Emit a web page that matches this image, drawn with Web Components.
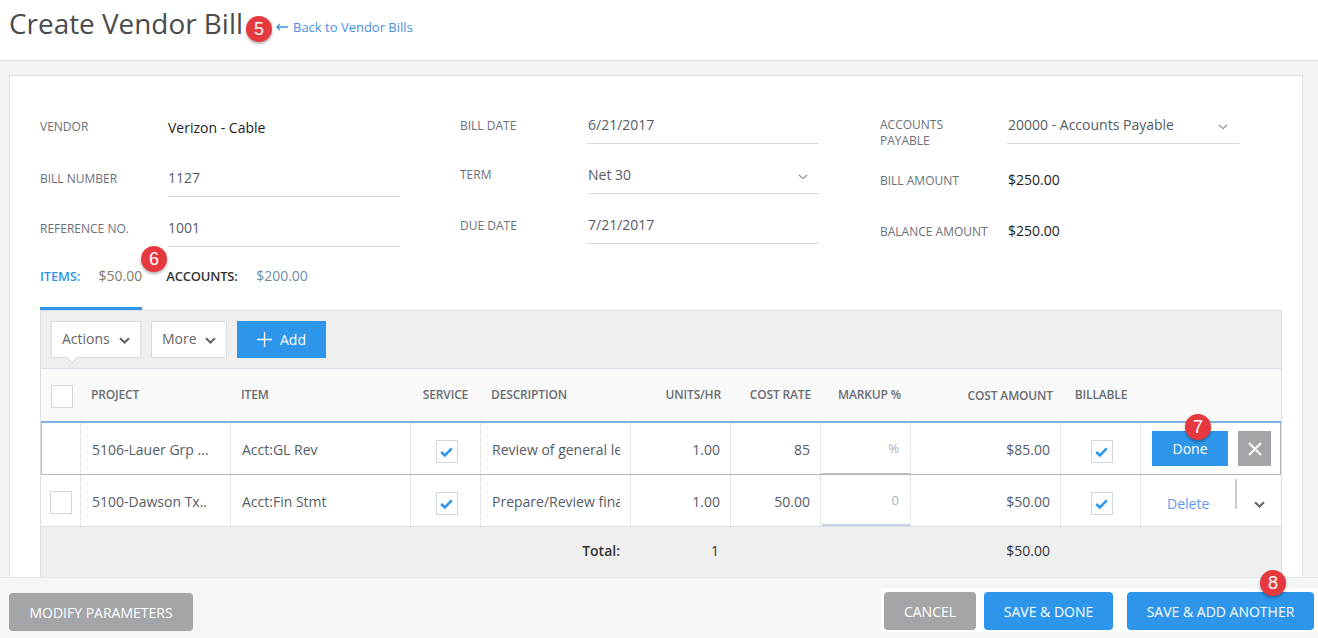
<!DOCTYPE html>
<html lang="en"><head><meta charset="utf-8"><title>Create Vendor Bill</title>
<style>
html,body{margin:0;padding:0;background:#f3f3f4;font-family:"Open Sans","Liberation Sans",sans-serif;color:#555c66}
</style></head><body>
<vb-page>
  <vb-header title-text="Create Vendor Bill" link="Back to Vendor Bills"></vb-header>
  <vb-card>
    <vb-form>
      <form-col style="--top:3px">
        <form-field label="Vendor" plain dark style="--lb:2px">Verizon - Cable</form-field>
        <form-field label="Bill Number">1127</form-field>
        <form-field label="Reference No.">1001</form-field>
      </form-col>
      <form-col style="--lw:127px;--vl:1px">
        <form-field label="Bill Date">6/21/2017</form-field>
        <form-field label="Term" select style="--lb:1px">Net 30</form-field>
        <form-field label="Due Date">7/21/2017</form-field>
      </form-col>
      <form-col style="--lw:127px;--vl:1px">
        <form-field label="Accounts Payable" select style="--ldy:13px;--lpr:30px">20000 - Accounts Payable</form-field>
        <form-field label="Bill Amount" plain dark style="--h:55px">$250.00</form-field>
        <form-field label="Balance Amount" plain dark style="--h:51px">$250.00</form-field>
      </form-col>
    </vb-form>
    <vb-tabs>
      <vb-tab name="ITEMS:" amount="$50.00" active></vb-tab>
      <vb-tab name="ACCOUNTS:" amount="$200.00"></vb-tab>
    </vb-tabs>
    <line-table>
      <line-toolbar>
        <menu-button notch style="--w:90px">Actions</menu-button>
        <menu-button style="--w:76px">More</menu-button>
        <add-button>Add</add-button>
      </line-toolbar>
      <line-row kind="head">
        <line-cell><check-box style="--mx:-1px;--my:2px"></check-box></line-cell>
        <line-cell head>PROJECT</line-cell>
        <line-cell head>ITEM</line-cell>
        <line-cell head align="center" style="--cx:1px">SERVICE</line-cell>
        <line-cell head>DESCRIPTION</line-cell>
        <line-cell head align="right" style="--pr:9px">UNITS/HR</line-cell>
        <line-cell head align="right" style="--pr:9px">COST RATE</line-cell>
        <line-cell head align="right" style="--pr:9px">MARKUP %</line-cell>
        <line-cell head align="right" style="--dy:2px;--pr:7px">COST AMOUNT</line-cell>
        <line-cell head align="center" style="--cx:2px">BILLABLE</line-cell>
        <line-cell></line-cell>
      </line-row>
      <line-row kind="edit">
        <line-cell></line-cell>
        <line-cell sep body>5106-Lauer Grp ...</line-cell>
        <line-cell sep body>Acct:GL Rev</line-cell>
        <line-cell sep align="center" style="--cx:2px"><check-box checked></check-box></line-cell>
        <line-cell sep body clip>Review of general le</line-cell>
        <line-cell sep body align="right">1.00</line-cell>
        <line-cell sep body align="right">85</line-cell>
        <line-cell sep align="right" input>%</line-cell>
        <line-cell sep body align="right">$85.00</line-cell>
        <line-cell sep align="center" style="--cx:2px"><check-box checked></check-box></line-cell>
        <line-cell sep flush><row-actions mode="edit"></row-actions></line-cell>
      </line-row>
      <line-row kind="body">
        <line-cell><check-box style="--mx:-2px;--my:4px"></check-box></line-cell>
        <line-cell sep body>5100-Dawson Tx..</line-cell>
        <line-cell sep body>Acct:Fin Stmt</line-cell>
        <line-cell sep align="center" style="--cx:2px"><check-box checked></check-box></line-cell>
        <line-cell sep body clip>Prepare/Review fina</line-cell>
        <line-cell sep body align="right">1.00</line-cell>
        <line-cell sep body align="right">50.00</line-cell>
        <line-cell sep align="right" input blue>0</line-cell>
        <line-cell sep body align="right">$50.00</line-cell>
        <line-cell sep align="center" style="--cx:2px"><check-box checked></check-box></line-cell>
        <line-cell sep flush><row-actions mode="view"></row-actions></line-cell>
      </line-row>
      <line-row kind="total">
        <line-cell></line-cell><line-cell></line-cell><line-cell></line-cell><line-cell></line-cell>
        <line-cell align="right" strong>Total:</line-cell>
        <line-cell align="right" dark style="--pr:11px">1</line-cell>
        <line-cell></line-cell><line-cell></line-cell>
        <line-cell align="right" dark>$50.00</line-cell>
        <line-cell></line-cell><line-cell></line-cell>
      </line-row>
    </line-table>
  </vb-card>
  <vb-footer>
    <foot-button slot="left" kind="gray" style="--w:184px">MODIFY PARAMETERS</foot-button>
    <foot-button kind="gray" style="--w:92px">CANCEL</foot-button>
    <foot-button style="--w:129px;--ml:8px">SAVE &amp; DONE</foot-button>
    <foot-button style="--w:187px;--ml:14px">SAVE &amp; ADD ANOTHER</foot-button>
  </vb-footer>
  <step-badge style="left:246px;top:16px">5</step-badge>
  <step-badge style="left:141px;top:246px">6</step-badge>
  <step-badge style="left:1185px;top:414px">7</step-badge>
  <step-badge style="left:1260px;top:570px">8</step-badge>
</vb-page>
<script>
const CHEV_THIN='<svg width="10" height="6" viewBox="0 0 10 6" fill="none" stroke="#7d8793" stroke-width="1.1"><path d="M1 1l4 3.6L9 1"/></svg>';
const CHEV_BOLD='<svg width="11" height="7" viewBox="0 0 11 7" fill="none" stroke="#666" stroke-width="2.2"><path d="M1 1.2l4.5 4.3L10 1.2"/></svg>';
function def(name,css,html){
  customElements.define(name,class extends HTMLElement{
    constructor(){super();this.attachShadow({mode:'open'});}
    connectedCallback(){
      const h=typeof html==='function'?html(this):html;
      this.shadowRoot.innerHTML='<style>'+css+'</style>'+h;
    }
  });
}
def('vb-page',`:host{display:flex;flex-direction:column;position:relative;width:1318px;height:638px;overflow:hidden;background:#f3f3f4}`,`<slot></slot>`);
def('vb-header',`:host{display:flex;align-items:center;height:60px;box-sizing:content-box;background:#fff;border-bottom:1px solid #d9dee6;padding-left:9px;flex:none}
h1{margin:0 0 14px;font:400 27.9px/36px "Open Sans",sans-serif;color:#4b4b4b;white-space:nowrap}
a{display:flex;align-items:center;margin:0 0 7px 33px;font:400 13px/18px "Open Sans",sans-serif;color:#4a90e2;gap:5px;white-space:nowrap}`,
 e=>`<h1>${e.getAttribute('title-text')}</h1><a><svg width="12" height="8" viewBox="0 0 12 8" fill="none" stroke="#3f8fe0" stroke-width="1.3"><path d="M12 4H1M4 1L1 4l3 3"/></svg>${e.getAttribute('link')}</a>`);
def('vb-card',`:host{display:block;flex:none;box-sizing:border-box;width:1294px;margin:14px 0 0 9px;padding:18px 20px 40px 30px;background:#fff;border:1px solid #d9dee6}`,`<slot></slot>`);
def('vb-form',`:host{display:flex;height:155px}`,`<slot></slot>`);
def('form-col',`:host{display:block;width:420px;flex:none;padding-top:var(--top,0)}`,`<slot></slot>`);
def('form-field',`:host{display:flex;align-items:flex-end;height:var(--h,50px);font:400 14px/20px "Open Sans",sans-serif;color:#555c66}
:host([dark]){color:#222}
.l{width:var(--lw,128px);flex:none;height:36px;margin-bottom:var(--lb,0);display:flex;align-items:center;font-size:12px;line-height:16px;color:#6b7078;text-transform:uppercase;padding:var(--ldy,0) var(--lpr,6px) 0 0;box-sizing:border-box}
.v{width:232px;flex:none;height:37px;box-sizing:border-box;border-bottom:1px solid #d5d9e0;display:flex;align-items:center;justify-content:space-between;padding:0 11px 0 var(--vl,0)}
:host([plain]) .v{border-color:transparent}
svg{display:block;margin-top:3px}`,
 e=>`<div class="l">${e.getAttribute('label')}</div><div class="v"><span><slot></slot></span>${e.hasAttribute('select')?CHEV_THIN:''}</div>`);
def('vb-tabs',`:host{display:flex;gap:24px;height:61px;box-sizing:border-box}`,`<slot></slot>`);
def('vb-tab',`:host{display:flex;gap:18.5px;box-sizing:border-box;height:61px;padding-top:18px;border-bottom:3px solid transparent;font:400 14px/18px "Open Sans",sans-serif;white-space:nowrap}
:host([active]){border-bottom-color:#2d96ea}
b{font-weight:600;font-size:13px;letter-spacing:-.2px;color:#333}
:host([active]) b{color:#2d96ea}
span{color:#6f8ca8}:host([active]) span{color:#84796a}`,
 e=>`<b>${e.getAttribute('name')}</b><span>${e.getAttribute('amount')}</span>`);
def('line-table',`:host{display:block;width:1242px;box-sizing:border-box;border:1px solid #d9dee6;background:#efefef}`,`<slot></slot>`);
def('line-toolbar',`:host{display:flex;gap:10px;height:58px;box-sizing:border-box;padding:10px 0 0 10px;border-bottom:1px solid #d9dee6;background:#efefef}`,`<slot></slot>`);
def('menu-button',`:host{display:flex;align-items:center;justify-content:space-between;position:relative;box-sizing:border-box;width:var(--w);height:37px;padding:0 10px;background:#fff;border:1px solid #d5dbe3;font:400 14px/20px "Open Sans",sans-serif;color:#666}
span{margin-top:-2px}svg{display:block;margin-top:2px}
i{position:absolute;left:15px;bottom:-5px;width:9px;height:9px;background:#fff;border:solid #d5dbe3;border-width:0 1px 1px 0;transform:rotate(45deg)}`,
 e=>`<span><slot></slot></span>${CHEV_BOLD}${e.hasAttribute('notch')?'<i></i>':''}`);
def('add-button',`:host{display:flex;align-items:center;gap:8px;box-sizing:border-box;width:89px;height:37px;padding-left:20px;background:#2d96ea;color:#fff;font:400 14px/20px "Open Sans",sans-serif}
svg{display:block}`,`<svg width="15" height="15" viewBox="0 0 15 15" stroke="#fff" stroke-width="1.3"><path d="M7.5 0v15M0 7.5h15"/></svg><span><slot></slot></span>`);
def('line-row',`:host{display:grid;grid-template-columns:39px 150px 180px 70px 150px 100px 90px 90px 150px 80px 141px;box-sizing:border-box;background:#fff}
:host([kind=head]){height:52px;background:#f9f9f9}
:host([kind=edit]){height:54px;border-top:2px solid #7fb2e0;border-bottom:1px solid #b4b6b9;box-shadow:inset 1px 0 #b4b6b9,inset -1px 0 #b4b6b9}
:host([kind=body]){height:52px;border-bottom:1px solid #d9dee6}
:host([kind=total]){height:50px;background:#efefef}`,`<slot></slot>`);
def('line-cell',`:host{display:flex;align-items:center;box-sizing:border-box;min-width:0;padding:0 10px 0 11px;font:400 14px/20px "Open Sans",sans-serif;color:#555c66;white-space:nowrap;overflow:hidden;position:relative}
:host([sep]){border-left:1px dotted #cfcfcf}
:host([body]){padding-top:2px}
:host([clip]) .t{display:block;overflow:hidden;max-width:128px}
:host([align=right]){justify-content:flex-end;padding-right:var(--pr,10px)}
:host([align=center]){justify-content:center;padding:0 0 0 var(--cx,0)}
:host([head]){font-size:12px;font-weight:600;letter-spacing:-.15px;color:#6a6d72;padding-top:var(--dy,0)}
:host([strong]){font-weight:600;font-size:14px;color:#333;padding-bottom:2px}
:host([dark]){color:#333;font-weight:400;padding-bottom:2px}
:host([input]){color:#a9b3bd;font-size:13px;padding-bottom:1px;padding-right:11px}
:host([flush]){padding:0;overflow:visible;align-items:stretch}
:host([input])::after{content:"";position:absolute;left:1px;right:0;bottom:0;height:1px;background:#b8bcc2}
:host([blue])::after{height:2px;background:#c6d2de}
.t{display:block;flex:none}
:host([flush]) .t{display:flex;flex:1}
slot{display:contents}`,`<div class="t"><slot></slot></div>`);
def('check-box',`:host{display:flex;align-items:center;justify-content:center;box-sizing:border-box;width:22px;height:var(--ch,23px);margin-left:var(--mx,0);margin-top:var(--my,6px);background:#fff;border:1px solid #d2d7de}`,
 e=>e.hasAttribute('checked')?`<svg width="13" height="10" viewBox="0 0 13 10" fill="none" stroke="#2d96ea" stroke-width="2.6"><path d="M1.2 5l3.6 3.4L11.8 1.4"/></svg>`:'');
def('row-actions',`:host{display:flex;flex:1;box-sizing:border-box;font:400 14px/20px "Open Sans",sans-serif}
.done{width:76px;height:35px;margin:8px 0 0 11px;background:#2d96ea;color:#fff;display:flex;align-items:center;justify-content:center}
.x{width:33px;height:35px;margin:8px 0 0 10px;background:#a3a5a8;display:flex;align-items:center;justify-content:center}
.del{width:94px;box-sizing:border-box;color:#5b9bf0;padding:19px 0 0 26px}
.bar{width:2px;height:30px;margin-top:4px;background:#c9cbce}
.ch{display:flex;margin:26px 0 0 17px}`,
 e=>e.getAttribute('mode')==='edit'
 ?`<div class="done">Done</div><div class="x"><svg width="14" height="14" viewBox="0 0 14 14" stroke="#fff" stroke-width="1.9"><path d="M1 1l12 12M13 1L1 13"/></svg></div>`
 :`<div class="del">Delete</div><div class="bar"></div><div class="ch">${CHEV_BOLD}</div>`);
def('vb-footer',`:host{position:absolute;left:0;right:0;bottom:0;height:61px;box-sizing:border-box;background:#f4f5f7;border-top:1px solid #e6e7e9;display:flex;justify-content:space-between}
.l{padding:15px 0 0 9px;display:flex}
.r{display:flex;align-self:flex-start;margin-top:10px;background:#fff;padding:4px 4px 4px 3px;height:44px;box-sizing:border-box}`,`<div class="l"><slot name="left"></slot></div><div class="r"><slot></slot></div>`);
def('foot-button',`:host{display:flex;align-items:center;justify-content:center;box-sizing:border-box;width:var(--w);height:38px;padding-top:1px;margin-left:var(--ml,0);border-radius:4px;background:#2d96ea;color:#fff;font:400 14px/20px "Open Sans",sans-serif;white-space:nowrap}
:host([kind=gray]){background:#a3a5a8}`,`<slot></slot>`);
def('step-badge',`:host{position:absolute;display:flex;align-items:center;justify-content:center;width:26px;height:26px;border-radius:50%;background:#e5383f;color:#fff;font:400 18px/20px "Liberation Sans",Arial,sans-serif;box-shadow:0 2px 3px rgba(0,0,0,.3)}`,`<slot></slot>`);
</script>
</body></html>
